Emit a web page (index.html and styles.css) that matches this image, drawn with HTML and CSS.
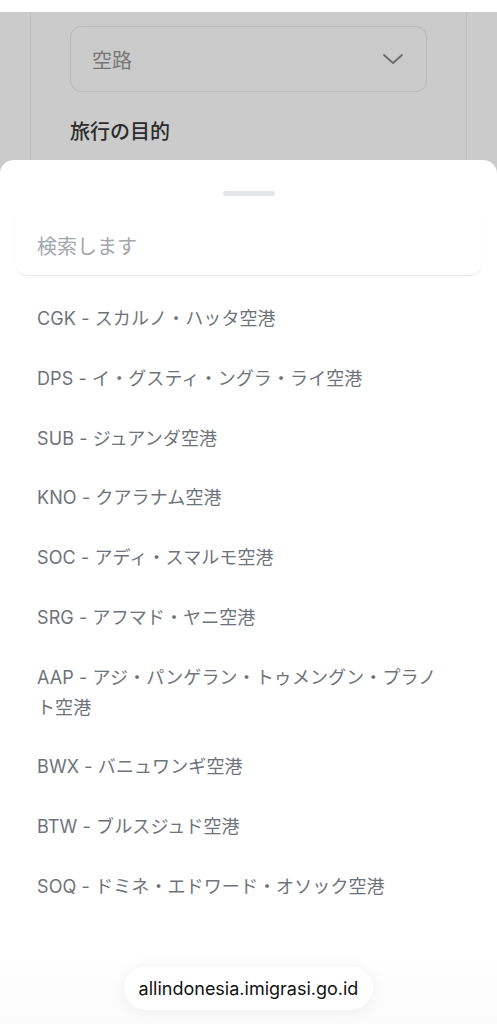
FILE: index.html
```html
<!DOCTYPE html>
<html lang="ja">
<head>
    <meta charset="UTF-8">
    <meta name="viewport" content="width=device-width, initial-scale=1.0">
    <title>空港を選択</title>
    <link rel="stylesheet" href="styles.css">
</head>
<body>
    <div class="status-bar"></div>

    <div class="page">
        <div class="form-card">
            <div class="select-box">
                <span class="select-value">空路</span>
                <svg class="chevron" width="22" height="14" viewBox="0 0 22 14">
                    <path d="M2 3 L11 11 L20 3" fill="none" stroke="#6b6b6b" stroke-width="1.8" stroke-linecap="round" stroke-linejoin="round"/>
                </svg>
            </div>
            <div class="field-label">旅行の目的</div>
        </div>
    </div>

    <div class="sheet">
        <div class="handle"></div>
        <div class="search">検索します</div>
        <ul class="airport-list">
            <li>CGK - スカルノ・ハッタ空港</li>
            <li>DPS - イ・グスティ・ングラ・ライ空港</li>
            <li>SUB - ジュアンダ空港</li>
            <li>KNO - クアラナム空港</li>
            <li>SOC - アディ・スマルモ空港</li>
            <li>SRG - アフマド・ヤニ空港</li>
            <li>AAP - アジ・パンゲラン・トゥメングン・プラノト空港</li>
            <li>BWX - バニュワンギ空港</li>
            <li>BTW - ブルスジュド空港</li>
            <li>SOQ - ドミネ・エドワード・オソック空港</li>
        </ul>
    </div>

    <div class="url-bar">
        <div class="url-pill">allindonesia.imigrasi.go.id</div>
    </div>
</body>
</html>
```

FILE: styles.css
```css
body {
    margin: 0;
    height: 1024px;
    overflow: hidden;
    background: #ffffff;
    font-family: Inter, "Noto Sans CJK JP", sans-serif;
    position: relative;
}
.status-bar {
    height: 12px;
    background: #ffffff;
}
.page {
    background: #cbcbcb;
    height: 1012px;
    padding: 0 30px;
}
.form-card {
    height: 100%;
    border-left: 1px solid #bdbdbd;
    border-right: 1px solid #bdbdbd;
    padding: 14px 39px 0;
}
.select-box {
    height: 64px;
    border: 1px solid #bababa;
    border-radius: 11px;
    display: flex;
    align-items: center;
    justify-content: space-between;
    padding: 0 22px 0 21px;
}
.select-value {
    font-size: 20px;
    color: #767676;
}
.field-label {
    margin-top: 24px;
    font-size: 20px;
    font-weight: 500;
    color: #2b2b2b;
}
.sheet {
    position: absolute;
    top: 160px;
    left: 0;
    right: 0;
    bottom: 0;
    background: #ffffff;
    border-radius: 14px 14px 0 0;
}
.handle {
    width: 52px;
    height: 5px;
    border-radius: 3px;
    background: #e4e6ea;
    margin: 31px auto 0;
}
.search {
    margin: 19px 16px 0;
    height: 60px;
    padding-left: 21px;
    display: flex;
    align-items: center;
    font-size: 20px;
    color: #a2a6ad;
    border-bottom: 1px solid #e7e8ea;
    border-radius: 0 0 12px 12px;
    box-shadow: 0 1px 2px rgba(0, 0, 0, 0.04);
}
.airport-list {
    list-style: none;
    margin: 13px 0 0;
    padding: 0 48px 0 37px;
}
.airport-list li {
    padding: 15px 0;
    line-height: 29.8px;
    font-size: 18px;
    letter-spacing: 0.1px;
    color: #6e737b;
}
.url-bar {
    position: absolute;
    left: 0;
    right: 0;
    bottom: 0;
    height: 76px;
    background: linear-gradient(#ffffff, #fbfbfb);
    display: flex;
    justify-content: center;
    padding-top: 18px;
    box-sizing: border-box;
}
.url-pill {
    height: 44px;
    padding: 0 15px;
    border-radius: 22px;
    background: #ffffff;
    box-shadow: 0 2px 16px rgba(0, 0, 0, 0.06);
    display: flex;
    align-items: center;
    font-size: 18px;
    color: #111111;
}
```
